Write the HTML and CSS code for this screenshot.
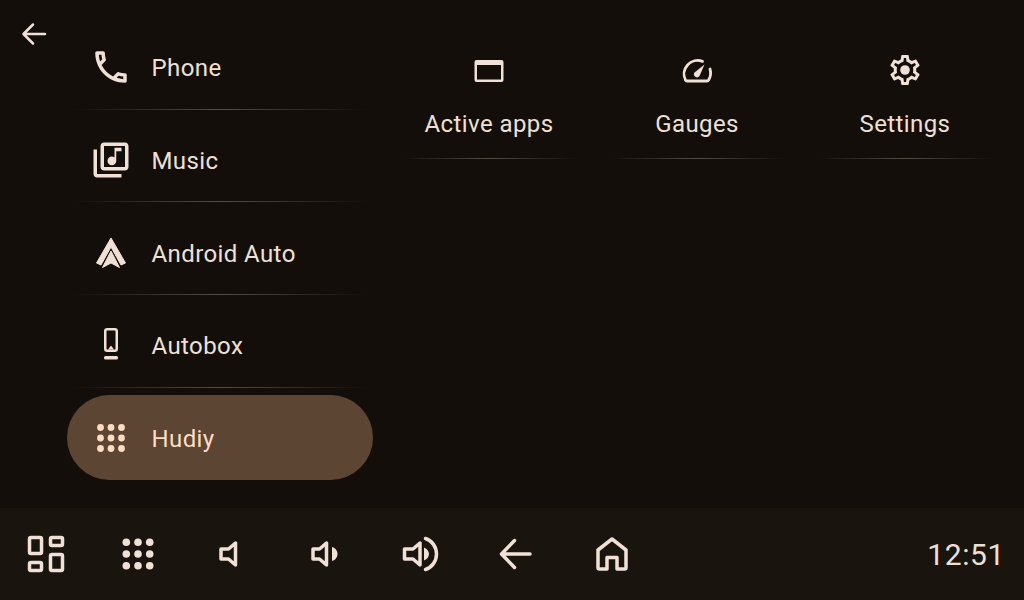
FILE: index.html
```html
<!DOCTYPE html>
<html lang="en">
<head>
    <meta charset="UTF-8">
    <title>Hudiy</title>
    <link rel="stylesheet" href="styles.css">
</head>
<body>
    <div class="screen">
        <button class="back-top">
            <svg viewBox="0 0 28 28" width="28" height="28"><path class="line thin" d="M25 14H4M13 4.500L3.500 14L13 23.500"/></svg>
        </button>

        <div class="main">
            <div class="menu">
                <div class="menu-item">
                    <svg class="menu-icon" viewBox="0 0 24 24"><path class="solid" d="M6.540 5c.06.89.21 1.760.45 2.590l-1.200 1.200c-.41-1.200-.67-2.470-.76-3.790h1.510m9.860 12.020c.85.24 1.720.39 2.600.45v1.490c-1.320-.09-2.590-.35-3.800-.75l1.200-1.190M7.500 3H4c-.55 0-1 .45-1 1 0 9.390 7.610 17 17 17 .55 0 1-.45 1-1v-3.490c0-.55-.45-1-1-1-1.240 0-2.450-.2-3.570-.57-.1-.04-.21-.05-.31-.05-.26 0-.51.1-.71.29l-2.200 2.200c-2.830-1.450-5.150-3.760-6.590-6.590l2.200-2.200c.28-.28.36-.67.25-1.020C8.700 6.450 8.500 5.250 8.500 4c0-.55-.45-1-1-1z"/></svg>
                    <span>Phone</span>
                </div>
                <div class="menu-item">
                    <svg class="menu-icon" viewBox="0 0 24 24"><path class="solid" d="M20 2H8c-1.100 0-2 .9-2 2v12c0 1.100.9 2 2 2h12c1.100 0 2-.9 2-2V4c0-1.100-.9-2-2-2zm0 14H8V4h12v12zm-7.500-1c1.380 0 2.500-1.120 2.500-2.500V7h3V5h-4v5.510c-.42-.32-.93-.51-1.500-.51-1.380 0-2.500 1.120-2.500 2.500s1.120 2.500 2.500 2.500zM4 6H2v14c0 1.100.9 2 2 2h14v-2H4V6z"/></svg>
                    <span>Music</span>
                </div>
                <div class="menu-item">
                    <svg class="menu-icon" viewBox="0 0 42 42"><path class="solid joined" d="M21 6L35.500 31L31 33L21 15L11 33L6.500 31Z"/><path class="solid joined" d="M21 19L29.500 35.500L21 31L12.500 35.500Z"/></svg>
                    <span>Android Auto</span>
                </div>
                <div class="menu-item">
                    <svg class="menu-icon" viewBox="0 0 42 42"><rect class="line thin" x="15.250" y="5.250" width="11.500" height="21.500" rx="2"/><path class="solid" d="M21 21.500L24 25.500H18Z"/><rect class="solid" x="14" y="32" width="14" height="3.500" rx="1.500"/></svg>
                    <span>Autobox</span>
                </div>
                <div class="menu-item active">
                    <svg class="menu-icon" viewBox="0 0 42 42">
                        <circle cx="10.500" cy="10.500" r="3.400"/><circle cx="21" cy="10.500" r="3.400"/><circle cx="31.500" cy="10.500" r="3.400"/>
                        <circle cx="10.500" cy="21" r="3.400"/><circle cx="21" cy="21" r="3.400"/><circle cx="31.500" cy="21" r="3.400"/>
                        <circle cx="10.500" cy="31.500" r="3.400"/><circle cx="21" cy="31.500" r="3.400"/><circle cx="31.500" cy="31.500" r="3.400"/>
                    </svg>
                    <span>Hudiy</span>
                </div>
            </div>

            <div class="apps">
                <div class="app">
                    <svg class="app-icon" viewBox="0 0 36 36"><path class="solid" fill-rule="evenodd" d="M5.500 8h25a2 2 0 0 1 2 2v18a2 2 0 0 1-2 2h-25a2 2 0 0 1-2-2V10a2 2 0 0 1 2-2zM6 13v14.500h24V13z"/></svg>
                    <span>Active apps</span>
                </div>
                <div class="app">
                    <svg class="app-icon" viewBox="0 0 36 36"><path class="line gauge" d="M23.500 9.400A13.600 13.600 0 0 0 6.500 28.200Q7 29 8 29H28Q29 29 29.500 28.200A13.600 13.600 0 0 0 31 17"/><path class="solid" d="M25.500 12.500L20.500 24A3 3 0 0 1 15.500 20.500Z"/></svg>
                    <span>Gauges</span>
                </div>
                <div class="app">
                    <svg class="app-icon" viewBox="0 0 24 24"><path class="solid" d="M19.430 12.980c.04-.32.07-.64.07-.98 0-.34-.03-.66-.07-.98l2.110-1.650c.19-.15.24-.42.12-.64l-2-3.460c-.09-.16-.26-.25-.44-.25-.06 0-.12.01-.17.03l-2.490 1c-.52-.4-1.080-.73-1.690-.98l-.38-2.650C14.460 2.180 14.250 2 14 2h-4c-.25 0-.46.18-.49.42l-.38 2.650c-.61.25-1.170.59-1.690.98l-2.490-1c-.06-.02-.12-.03-.18-.03-.17 0-.34.09-.43.25l-2 3.460c-.13.22-.07.49.12.64l2.110 1.650c-.04.32-.07.65-.07.98 0 .33.03.66.07.98l-2.110 1.650c-.19.15-.24.42-.12.64l2 3.460c.09.16.26.25.44.25.06 0 .12-.01.17-.03l2.490-1c.52.4 1.080.73 1.690.98l.38 2.650c.03.24.24.42.49.42h4c.25 0 .46-.18.49-.42l.38-2.650c.61-.25 1.170-.59 1.690-.98l2.490 1c.06.02.12.03.18.03.17 0 .34-.09.43-.25l2-3.460c.12-.22.07-.49-.12-.64l-2.110-1.650zm-1.980-1.710c.04.31.05.52.05.73 0 .21-.02.43-.05.73l-.14 1.130.89.7 1.080.84-.7 1.210-1.270-.51-1.040-.42-.9.68c-.43.32-.84.56-1.250.73l-1.060.43-.16 1.130-.2 1.350h-1.400l-.19-1.350-.16-1.130-1.060-.43c-.43-.18-.83-.41-1.230-.71l-.91-.7-1.060.43-1.270.51-.7-1.210 1.080-.84.89-.7-.14-1.130c-.03-.31-.05-.54-.05-.74s.02-.43.05-.73l.14-1.130-.89-.7-1.080-.84.7-1.210 1.270.51 1.040.42.9-.68c.43-.32.84-.56 1.250-.73l1.060-.43.16-1.130.2-1.350h1.390l.19 1.350.16 1.130 1.060.43c.43.18.83.41 1.230.71l.91.7 1.060-.43 1.270-.51.7 1.210-1.070.85-.89.7.14 1.130z"/><circle class="solid" cx="12" cy="12" r="3.200"/></svg>
                    <span>Settings</span>
                </div>
            </div>
        </div>

        <div class="bar">
            <div class="bar-btn">
                <svg viewBox="0 0 48 48"><rect class="line" x="7.500" y="7.500" width="12" height="16" rx="1.500"/><rect class="line" x="28.500" y="7.500" width="12" height="8" rx="1.500"/><rect class="line" x="28.500" y="24.500" width="12" height="16" rx="1.500"/><rect class="line" x="7.500" y="32.500" width="12" height="8" rx="1.500"/></svg>
            </div>
            <div class="bar-btn">
                <svg viewBox="2 0 48 48">
                    <circle class="solid" cx="12.300" cy="12.300" r="3.800"/><circle class="solid" cx="24" cy="12.300" r="3.800"/><circle class="solid" cx="35.700" cy="12.300" r="3.800"/>
                    <circle class="solid" cx="12.300" cy="24" r="3.800"/><circle class="solid" cx="24" cy="24" r="3.800"/><circle class="solid" cx="35.700" cy="24" r="3.800"/>
                    <circle class="solid" cx="12.300" cy="35.700" r="3.800"/><circle class="solid" cx="24" cy="35.700" r="3.800"/><circle class="solid" cx="35.700" cy="35.700" r="3.800"/>
                </svg>
            </div>
            <div class="bar-btn">
                <svg viewBox="3 0 48 48"><path class="line" d="M27.500 13V35L20.500 29H13V19H20.500Z"/></svg>
            </div>
            <div class="bar-btn">
                <svg viewBox="3 0 48 48"><path class="line" d="M24.500 13V35L17.500 29H11V19H17.500Z"/><path class="solid" d="M30 17C33.500 18 35.500 21 35.500 24S33.500 30 30 31Z"/></svg>
            </div>
            <div class="bar-btn">
                <svg viewBox="3 0 48 48"><path class="line" d="M24 13V35L17 29H8.500V19H17Z"/><path class="solid" d="M28 17.500C31.500 19 33 21.500 33 24S31.500 29 28 30.500Z"/><path class="line" d="M29.500 8.500C36 10.500 40.500 17 40.500 24S36 37.500 29.500 39.500"/></svg>
            </div>
            <div class="bar-btn">
                <svg viewBox="2 0 48 48"><path class="line" d="M38 24H11M22.500 10.500L9.500 24L22.500 37.500"/></svg>
            </div>
            <div class="bar-btn">
                <svg viewBox="0 0 48 48"><path class="line" d="M24 9L10 20V37.500Q10 39 11.500 39H19V27.500H29V39H36.500Q38 39 38 37.500V20Z"/></svg>
            </div>
            <div class="clock">12:51</div>
        </div>
    </div>
</body>
</html>
```

FILE: styles.css
```css
* {
    box-sizing: border-box;
}
body {
    margin: 0;
    background-color: #130e0a;
    font-family: Roboto, sans-serif;
    color: #efe0d6;
}
.screen {
    position: relative;
    width: 1024px;
    height: 600px;
    overflow: hidden;
    display: flex;
    flex-direction: column;
}
svg {
    display: block;
    flex: none;
    fill: #f0e0d6;
}
.solid {
    fill: #f0e0d6;
}
.joined {
    stroke: #f0e0d6;
    stroke-width: 1;
    stroke-linejoin: round;
}
.line {
    fill: none;
    stroke: #f0e0d6;
    stroke-width: 3.5;
    stroke-linejoin: round;
    stroke-linecap: round;
}
.line.thin {
    stroke-width: 2.5;
}
.line.gauge {
    stroke-width: 2.8;
}
.back-top {
    position: absolute;
    left: 20px;
    top: 20px;
    padding: 0;
    border: none;
    background: none;
}
.main {
    flex: 1;
    display: flex;
    min-height: 0;
}

/* left list */
.menu {
    width: 306px;
    margin-left: 67px;
    padding-top: 24.7px;
    display: flex;
    flex-direction: column;
    gap: 7.67px;
}
.menu-item {
    height: 85px;
    flex: none;
    display: flex;
    align-items: center;
    gap: 19.5px;
    padding-left: 23px;
    font-size: 24px;
    letter-spacing: 0.4px;
    background: linear-gradient(90deg, transparent, #544d46 50%, transparent) center bottom / 296px 1px no-repeat;
}
.menu-item span {
    padding-top: 2px;
}
.menu-item.active {
    background: #5d4534;
    border-radius: 43px;
    color: #ffdcc2;
}
.menu-item.active svg {
    fill: #ffdcc2;
}
.menu-icon {
    width: 42px;
    height: 42px;
}

/* right grid */
.apps {
    margin-left: 12px;
    padding-top: 25px;
    display: grid;
    grid-template-columns: repeat(3, 208px);
    align-content: start;
}
.app {
    height: 134px;
    padding-top: 27px;
    display: flex;
    flex-direction: column;
    align-items: center;
    gap: 22px;
    font-size: 24px;
    letter-spacing: 0.4px;
    line-height: 28px;
    background: linear-gradient(90deg, transparent, #544d46 50%, transparent) center bottom / 174px 1px no-repeat;
}
.app-icon {
    width: 36px;
    height: 36px;
}

/* bottom bar */
.bar {
    height: 92px;
    flex: none;
    display: flex;
    align-items: center;
    background-color: #1a140f;
}
.bar-btn {
    width: 94.33px;
    display: flex;
    justify-content: center;
}
.bar-btn:first-child {
    margin-left: -1px;
}
.bar-btn svg {
    width: 48px;
    height: 48px;
}
.clock {
    margin-left: auto;
    padding-right: 19px;
    font-size: 30px;
    letter-spacing: 0.6px;
}
```
